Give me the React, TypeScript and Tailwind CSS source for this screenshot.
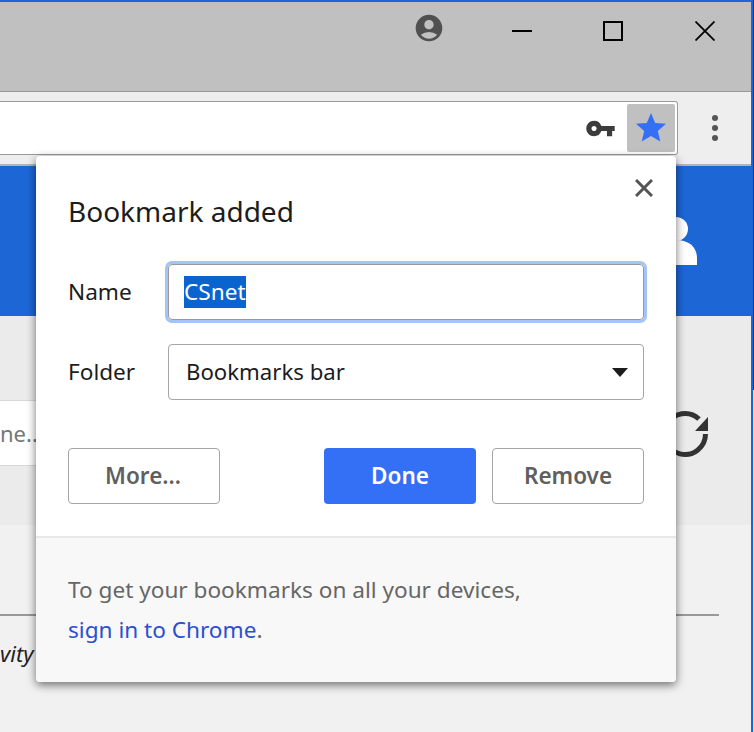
import { MdAccountCircle, MdStar, MdVpnKey } from "react-icons/md";

function WindowButtons() {
  return (
    <div className="flex h-[58px] items-center justify-end">
      <MdAccountCircle className="mb-[6px] mr-[32px] h-[32px] w-[32px] text-[#505050]" />
      <div className="flex w-[90px] justify-center">
        <div className="h-[2px] w-[20px] bg-black" />
      </div>
      <div className="flex w-[92px] justify-center">
        <div className="h-[20px] w-[20px] border-2 border-black" />
      </div>
      <div className="flex w-[92px] justify-center">
        <svg width="20" height="20" viewBox="0 0 20 20" stroke="black" strokeWidth="1.8">
          <path d="M0.5 0.5 L19.5 19.5 M19.5 0.5 L0.5 19.5" />
        </svg>
      </div>
    </div>
  );
}

function Toolbar() {
  return (
    <div className="flex h-[74px] border-b-2 border-[#b4b4b4] bg-[#eeeeee] pt-[9px]">
      <div className="flex h-[54px] w-[678px] items-center justify-end rounded-r-[3px] border border-l-0 border-[#9a9a9a] bg-white pr-[2px]">
        <MdVpnKey className="mr-[11px] h-[31px] w-[31px] text-[#3c3c3c]" />
        <div className="flex h-[48px] w-[48px] items-center justify-center rounded-[2px] bg-[#c0c0c0] pr-[1px]">
          <MdStar className="h-[36px] w-[36px] text-[#3470f5]" />
        </div>
      </div>
      <div className="flex h-[54px] flex-1 flex-col items-center justify-center gap-[4px]">
        <div className="h-[6px] w-[6px] rounded-full bg-[#555555]" />
        <div className="h-[6px] w-[6px] rounded-full bg-[#555555]" />
        <div className="h-[6px] w-[6px] rounded-full bg-[#555555]" />
      </div>
    </div>
  );
}

function PageBehind() {
  return (
    <>
      {/* Blue site header */}
      <div className="flex h-[150px] justify-end bg-[#1c66d6] pr-[52px] pt-[51px]">
        <svg width="44" height="48" viewBox="0 0 44 48" fill="white">
          <circle cx="21" cy="12" r="12" />
          <path d="M0 48 V40 C0 28 10 23 21 23 C35 23 42 31 42 41 V48 Z" />
        </svg>
      </div>

      {/* Search band */}
      <div className="h-[209px] bg-[#ebebeb] pt-[84px]">
        <div className="flex items-center justify-between pr-[40px]">
          <div className="flex h-[66px] w-[100px] items-center border-y border-[#d8d8d8] bg-white text-[22px] text-[#777777]">
            ne..
          </div>
          <svg width="48" height="50" viewBox="0 0 48 50" fill="none">
            <path d="M36 11 A20.5 20.5 0 1 0 42.5 26" stroke="#333333" strokeWidth="5" />
            <path d="M32 23 L45 9 V23 Z" fill="#333333" />
          </svg>
        </div>
      </div>

      {/* Lower content */}
      <div className="h-[207px] bg-[#f1f1f1] pt-[89px]">
        <div className="h-[2px] w-[719px] bg-[#999999]" />
        <div className="mt-[22px] text-[22px] italic leading-[30px] text-[#222222]">vity</div>
      </div>
    </>
  );
}

function BookmarkDialog() {
  return (
    <div className="absolute left-[36px] top-[156px] flex h-[526px] w-[640px] flex-col overflow-hidden rounded-[4px] bg-white shadow-[0_3px_10px_rgba(0,0,0,0.55)]">
      <div className="relative h-[380px] px-[32px]">
        <button type="button" className="absolute right-[23px] top-[23px]">
          <svg width="18" height="18" viewBox="0 0 18 18" stroke="#555555" strokeWidth="3" className="block">
            <path d="M1 1 L17 17 M17 1 L1 17" />
          </svg>
        </button>

        <h1 className="pt-[35px] text-[28px] leading-[40px] text-[#1c1c1c]">Bookmark added</h1>

        <div className="mt-[33px] flex items-center">
          <span className="w-[100px] text-[22.6px] text-[#1c1c1c]">Name</span>
          <div className="flex h-[56px] flex-1 items-center rounded-[4px] border border-[#999999] px-[15px] text-[22.6px] shadow-[0_0_0_3px_#a4c4f8]">
            <span className="bg-[#0a64d0] leading-[32px] text-white">CSnet</span>
          </div>
        </div>

        <div className="mt-[24px] flex items-center">
          <span className="w-[100px] text-[22.6px] text-[#1c1c1c]">Folder</span>
          <div className="flex h-[56px] flex-1 items-center justify-between rounded-[4px] border border-[#a6a6a6] pl-[17px] pr-[15px] text-[22.2px] text-[#1c1c1c]">
            <span>Bookmarks bar</span>
            <svg width="16" height="9" viewBox="0 0 16 9" fill="#1c1c1c">
              <path d="M0 0 H16 L8 9 Z" />
            </svg>
          </div>
        </div>

        <div className="mt-[48px] flex text-[22.5px] font-semibold">
          <button type="button" className="h-[56px] w-[152px] rounded-[4px] border border-[#a6a6a6] pr-[2px] text-[#5f5f5f]">
            More...
          </button>
          <button type="button" className="ml-auto h-[56px] w-[152px] rounded-[4px] bg-[#3470f5] text-white">
            Done
          </button>
          <button type="button" className="ml-[16px] h-[56px] w-[152px] rounded-[4px] border border-[#a6a6a6] text-[#5f5f5f]">
            Remove
          </button>
        </div>
      </div>

      <div className="flex-1 border-t-2 border-[#e8e8e8] bg-[#f8f8f8] px-[32px] pt-[32px] text-[22.6px] leading-[40px] text-[#666666]">
        <div>To get your bookmarks on all your devices,</div>
        <div>
          <a className="text-[#2b4fd0]">sign in to Chrome</a>.
        </div>
      </div>
    </div>
  );
}

export default function App() {
  return (
    <div className="relative flex h-[732px] w-[754px] overflow-hidden bg-[#f1f1f1] font-['Noto_Sans',sans-serif]">
      <div className="w-[751px]">
        <div className="h-[2px] bg-[#1c66d6]" />
        <div className="h-[90px] border-b border-[#999999] bg-[#c0c0c0]">
          <WindowButtons />
        </div>
        <Toolbar />
        <PageBehind />
      </div>
      <div className="w-[2px] bg-[#1c66d6]" />
      <div className="flex w-[1px] flex-col">
        <div className="h-[390px] bg-[#123a78]" />
        <div className="flex-1 bg-[#cfdcf0]" />
      </div>
      <BookmarkDialog />
    </div>
  );
}
